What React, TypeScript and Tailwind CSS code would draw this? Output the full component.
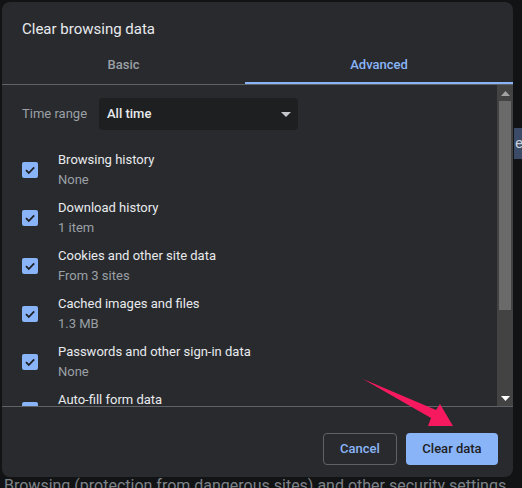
import React from "react";

const items = [
  { title: "Browsing history", sub: "None" },
  { title: "Download history", sub: "1 item" },
  { title: "Cookies and other site data", sub: "From 3 sites" },
  { title: "Cached images and files", sub: "1.3 MB" },
  { title: "Passwords and other sign-in data", sub: "None" },
  { title: "Auto-fill form data", sub: "None" },
];

function Checkbox() {
  return (
    <span className="flex h-4 w-4 shrink-0 items-center justify-center rounded-[2px] bg-[#8ab4f8]">
      <svg width="12" height="12" viewBox="0 0 12 12">
        <path d="M2 6.2 L4.8 9 L10.2 3.4" fill="none" stroke="#202124" strokeWidth="1.8" />
      </svg>
    </span>
  );
}

function Scrollbar() {
  return (
    <div className="flex w-4 shrink-0 flex-col bg-[#434343]">
      <div className="flex h-4 items-center justify-center">
        <svg width="9" height="5" viewBox="0 0 9 5">
          <path d="M0 5 L4.5 0 L9 5 Z" fill="#a3a3a3" />
        </svg>
      </div>
      <div className="mx-[2px] h-[209px] bg-[#6a6a6a]" />
      <div className="flex-1" />
      <div className="flex h-4 items-center justify-center">
        <svg width="9" height="5" viewBox="0 0 9 5">
          <path d="M0 0 L9 0 L4.5 5 Z" fill="#ffffff" />
        </svg>
      </div>
    </div>
  );
}

export default function App() {
  return (
    <div
      className="relative h-[488px] w-[522px] overflow-hidden bg-[#121314] pt-[2px] pl-[2px]"
      style={{ fontFamily: "Roboto, 'Noto Sans', sans-serif" }}
    >
      {/* page behind the dialog */}
      <div className="absolute top-[128px] left-[514px] flex h-[31px] w-[20px] items-center bg-[#3b4a66] pl-[1px] text-[15px] text-[#c9cfd8]">
        e
      </div>
      <div className="absolute top-[474px] left-[4px] text-[16px] whitespace-nowrap text-[#7d8288]">
        Browsing (protection from dangerous sites) and other security settings
      </div>

      <div className="relative flex h-[475px] w-[511px] flex-col overflow-hidden rounded-lg bg-[#292a2d]">
        <div className="px-5 pt-[17px] pb-[5px] text-[15px] leading-5 text-[#e8eaed]">Clear browsing data</div>

        <div className="flex h-[41px] border-b border-[#5f6368] text-[13px] font-medium">
          <div className="flex w-[243px] items-center justify-center pt-[2px] text-[#9aa0a6]">Basic</div>
          <div className="relative flex flex-1 items-center justify-center pt-[2px] text-[#8ab4f8]">
            Advanced
            <div className="absolute right-0 bottom-0 left-0 h-[2px] bg-[#8ab4f8]" />
          </div>
        </div>

        <div className="flex h-[322px] border-b border-[#5f6368]">
          <div className="flex-1 overflow-hidden pt-[13px] pl-5">
            <div className="flex items-center">
              <span className="w-[77px] text-[13px] text-[#9aa0a6]">Time range</span>
              <div className="flex h-8 w-[199px] items-center justify-between rounded bg-[#1e1f21] pr-[7px] pl-2 text-[13px] font-medium text-[#e8eaed]">
                All time
                <svg width="10" height="5" viewBox="0 0 10 5">
                  <path d="M0 0 L10 0 L5 5 Z" fill="#c4c7cb" />
                </svg>
              </div>
            </div>
            <ul className="mt-4">
              {items.map((it) => (
                <li key={it.title} className="flex h-12 items-center">
                  <Checkbox />
                  <div className="ml-5 text-[13px] leading-5">
                    <div className="text-[#e8eaed]">{it.title}</div>
                    <div className="text-[#9aa0a6]">{it.sub}</div>
                  </div>
                </li>
              ))}
            </ul>
          </div>
          <Scrollbar />
        </div>

        <div className="flex justify-end gap-[9px] pt-[26px] pr-[15px] text-[13px] font-medium">
          <button className="h-8 w-[74px] rounded border border-[#5f6368] text-[#8ab4f8]">Cancel</button>
          <button className="h-8 w-[92px] rounded bg-[#8ab4f8] text-[#202124]">Clear data</button>
        </div>
      </div>

      {/* annotation arrow */}
      <svg className="pointer-events-none absolute top-0 left-0" width="522" height="488">
        <polygon
          points="363,379 436,410 440,404 453,426 428,426 431,418"
          fill="#f7195f"
        />
      </svg>
    </div>
  );
}
